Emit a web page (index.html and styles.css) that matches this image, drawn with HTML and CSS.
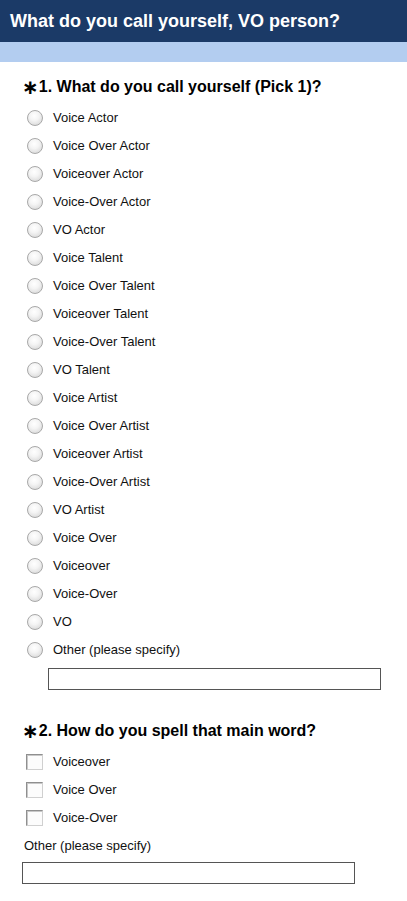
FILE: index.html
```html
<!DOCTYPE html>
<html>
<head>
<meta charset="utf-8">
<link rel="stylesheet" href="styles.css">
</head>
<body>
<div class="header"><h1 class="title">What do you call yourself, VO person?</h1></div>
<div class="band"></div>
<div class="survey">
  <div class="question q1">
    <div class="qhead"><span class="req">∗</span><span class="qtext">1. What do you call yourself (Pick 1)?</span></div>
    <ul class="options">
      <li class="opt"><span class="radio"></span><span class="lbl">Voice Actor</span></li>
      <li class="opt"><span class="radio"></span><span class="lbl">Voice Over Actor</span></li>
      <li class="opt"><span class="radio"></span><span class="lbl">Voiceover Actor</span></li>
      <li class="opt"><span class="radio"></span><span class="lbl">Voice-Over Actor</span></li>
      <li class="opt"><span class="radio"></span><span class="lbl">VO Actor</span></li>
      <li class="opt"><span class="radio"></span><span class="lbl">Voice Talent</span></li>
      <li class="opt"><span class="radio"></span><span class="lbl">Voice Over Talent</span></li>
      <li class="opt"><span class="radio"></span><span class="lbl">Voiceover Talent</span></li>
      <li class="opt"><span class="radio"></span><span class="lbl">Voice-Over Talent</span></li>
      <li class="opt"><span class="radio"></span><span class="lbl">VO Talent</span></li>
      <li class="opt"><span class="radio"></span><span class="lbl">Voice Artist</span></li>
      <li class="opt"><span class="radio"></span><span class="lbl">Voice Over Artist</span></li>
      <li class="opt"><span class="radio"></span><span class="lbl">Voiceover Artist</span></li>
      <li class="opt"><span class="radio"></span><span class="lbl">Voice-Over Artist</span></li>
      <li class="opt"><span class="radio"></span><span class="lbl">VO Artist</span></li>
      <li class="opt"><span class="radio"></span><span class="lbl">Voice Over</span></li>
      <li class="opt"><span class="radio"></span><span class="lbl">Voiceover</span></li>
      <li class="opt"><span class="radio"></span><span class="lbl">Voice-Over</span></li>
      <li class="opt"><span class="radio"></span><span class="lbl">VO</span></li>
      <li class="opt"><span class="radio"></span><span class="lbl">Other (please specify)</span></li>
    </ul>
    <div class="textbox other1"></div>
  </div>
  <div class="question q2">
    <div class="qhead"><span class="req">∗</span><span class="qtext">2. How do you spell that main word?</span></div>
    <ul class="options">
      <li class="opt"><span class="check"></span><span class="lbl">Voiceover</span></li>
      <li class="opt"><span class="check"></span><span class="lbl">Voice Over</span></li>
      <li class="opt"><span class="check"></span><span class="lbl">Voice-Over</span></li>
    </ul>
    <div class="otherlbl">Other (please specify)</div>
    <div class="textbox other2"></div>
  </div>
</div>
</body>
</html>
```
FILE: styles.css
```css
html, body {
  margin: 0;
  padding: 0;
  background: #ffffff;
  font-family: "Liberation Sans", Arial, sans-serif;
  color: #000;
}
.header {
  background: #1b3a67;
  height: 42px;
  display: flex;
  align-items: center;
}
.title {
  margin: 0 0 0 10px;
  color: #ffffff;
  font-size: 18px;
  font-weight: bold;
  line-height: 20px;
}
.band {
  background: #b3cdf0;
  height: 20px;
}
.survey {
  display: flex;
  flex-direction: column;
}
.qhead {
  display: flex;
  align-items: center;
  height: 20px;
  padding-left: 22px;
}
.q1 .qhead { margin-top: 15px; }
.q2 .qhead { margin-top: 31px; }
.req {
  font-family: "DejaVu Sans", sans-serif;
  font-weight: bold;
  font-size: 20px;
  line-height: 20px;
}
.qtext {
  font-size: 16px;
  font-weight: bold;
  line-height: 20px;
}
.options {
  list-style: none;
  margin: 7px 0 0 0;
  padding: 0;
}
.opt {
  height: 28px;
  display: flex;
  align-items: center;
}
.radio {
  box-sizing: border-box;
  width: 16px;
  height: 16px;
  margin-left: 27px;
  margin-right: 10px;
  border-radius: 50%;
  border: 1px solid #a8a8a8;
  background: radial-gradient(circle at 45% 35%, #ffffff 0%, #f4f4f4 40%, #dcdcdc 80%, #c4c4c4 100%);
}
.check {
  box-sizing: border-box;
  width: 17px;
  height: 16px;
  margin-left: 26px;
  margin-right: 10px;
  border: 1px solid;
  border-color: #8f8f8f #d0d0d0 #d0d0d0 #8f8f8f;
  box-shadow: inset 1px 1px 0 #c8c8c8;
  background: #fcfcfc;
}
.lbl {
  font-size: 13px;
  line-height: 16px;
  color: #111;
}
.textbox {
  box-sizing: border-box;
  height: 22px;
  width: 333px;
  border: 1px solid #555555;
  background: #fff;
}
.other1 {
  margin: 4px 0 0 48px;
}
.otherlbl {
  font-size: 13px;
  line-height: 16px;
  margin: 6px 0 0 24px;
  color: #111;
}
.other2 {
  margin: 8px 0 0 22px;
}
```
